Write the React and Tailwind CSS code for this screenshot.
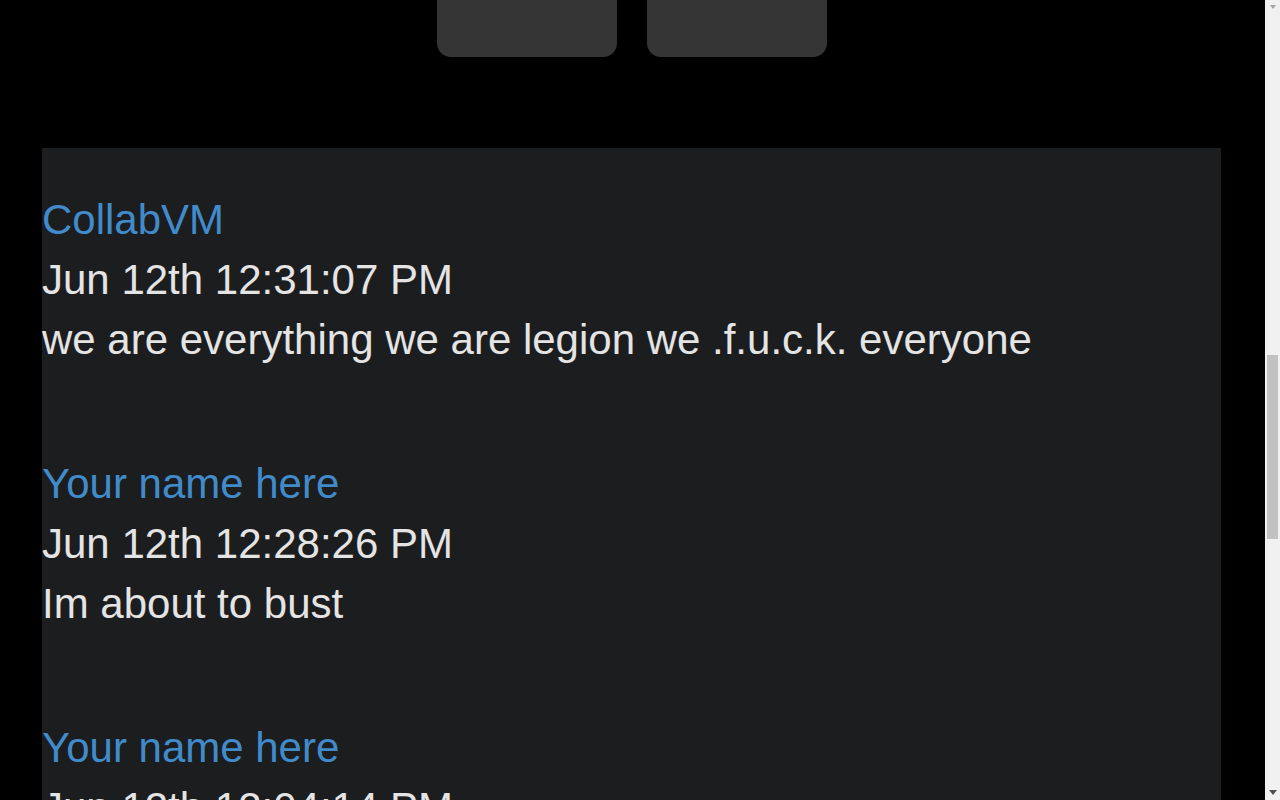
export default function App() {
  const msgs = [
    { name: "CollabVM", time: "Jun 12th 12:31:07 PM", text: "we are everything we are legion we .f.u.c.k. everyone" },
    { name: "Your name here", time: "Jun 12th 12:28:26 PM", text: "Im about to bust" },
    { name: "Your name here", time: "Jun 12th 12:04:14 PM", text: "hello" },
  ];
  return (
    <div className="flex h-[800px] w-[1280px] overflow-hidden bg-black" style={{ fontFamily: '"Liberation Sans", Arial, sans-serif' }}>
      <div className="flex w-[1265px] flex-col">
        <div className="flex h-[57px] shrink-0 justify-center gap-[30px] pr-[1px]">
          <div className="h-[57px] w-[180px] rounded-b-[14px] bg-[#353535] shadow-[0_2px_6px_rgba(0,0,0,0.5)]" />
          <div className="h-[57px] w-[180px] rounded-b-[14px] bg-[#353535] shadow-[0_2px_6px_rgba(0,0,0,0.5)]" />
        </div>
        <div className="ml-[42px] mt-[91px] w-[1179px] grow bg-[#1c1d1f]">
          {msgs.map((m, i) => (
            <div key={i} className="py-[42px] text-[42px] leading-[60px] text-[#e4e4e4]">
              <div className="text-[#428bca]">{m.name}</div>
              <div>{m.time}</div>
              <div>{m.text}</div>
            </div>
          ))}
        </div>
      </div>
      <div className="relative flex w-[15px] flex-col bg-[#f1f1f1]">
        <div className="flex h-[15px] items-center justify-center">
          <svg width="8" height="5" viewBox="0 0 8 5"><path d="M1 0 L7 0 L4 4 Z" fill="#a3a3a3" /></svg>
        </div>
        <div className="mx-[2px] mt-[340px] h-[184px] bg-[#c1c1c1]" />
        <div className="grow" />
        <div className="flex h-[15px] items-center justify-center">
          <svg width="8" height="5" viewBox="0 0 8 5"><path d="M0 0 L8 0 L4 5 Z" fill="#505050" /></svg>
        </div>
      </div>
    </div>
  );
}
